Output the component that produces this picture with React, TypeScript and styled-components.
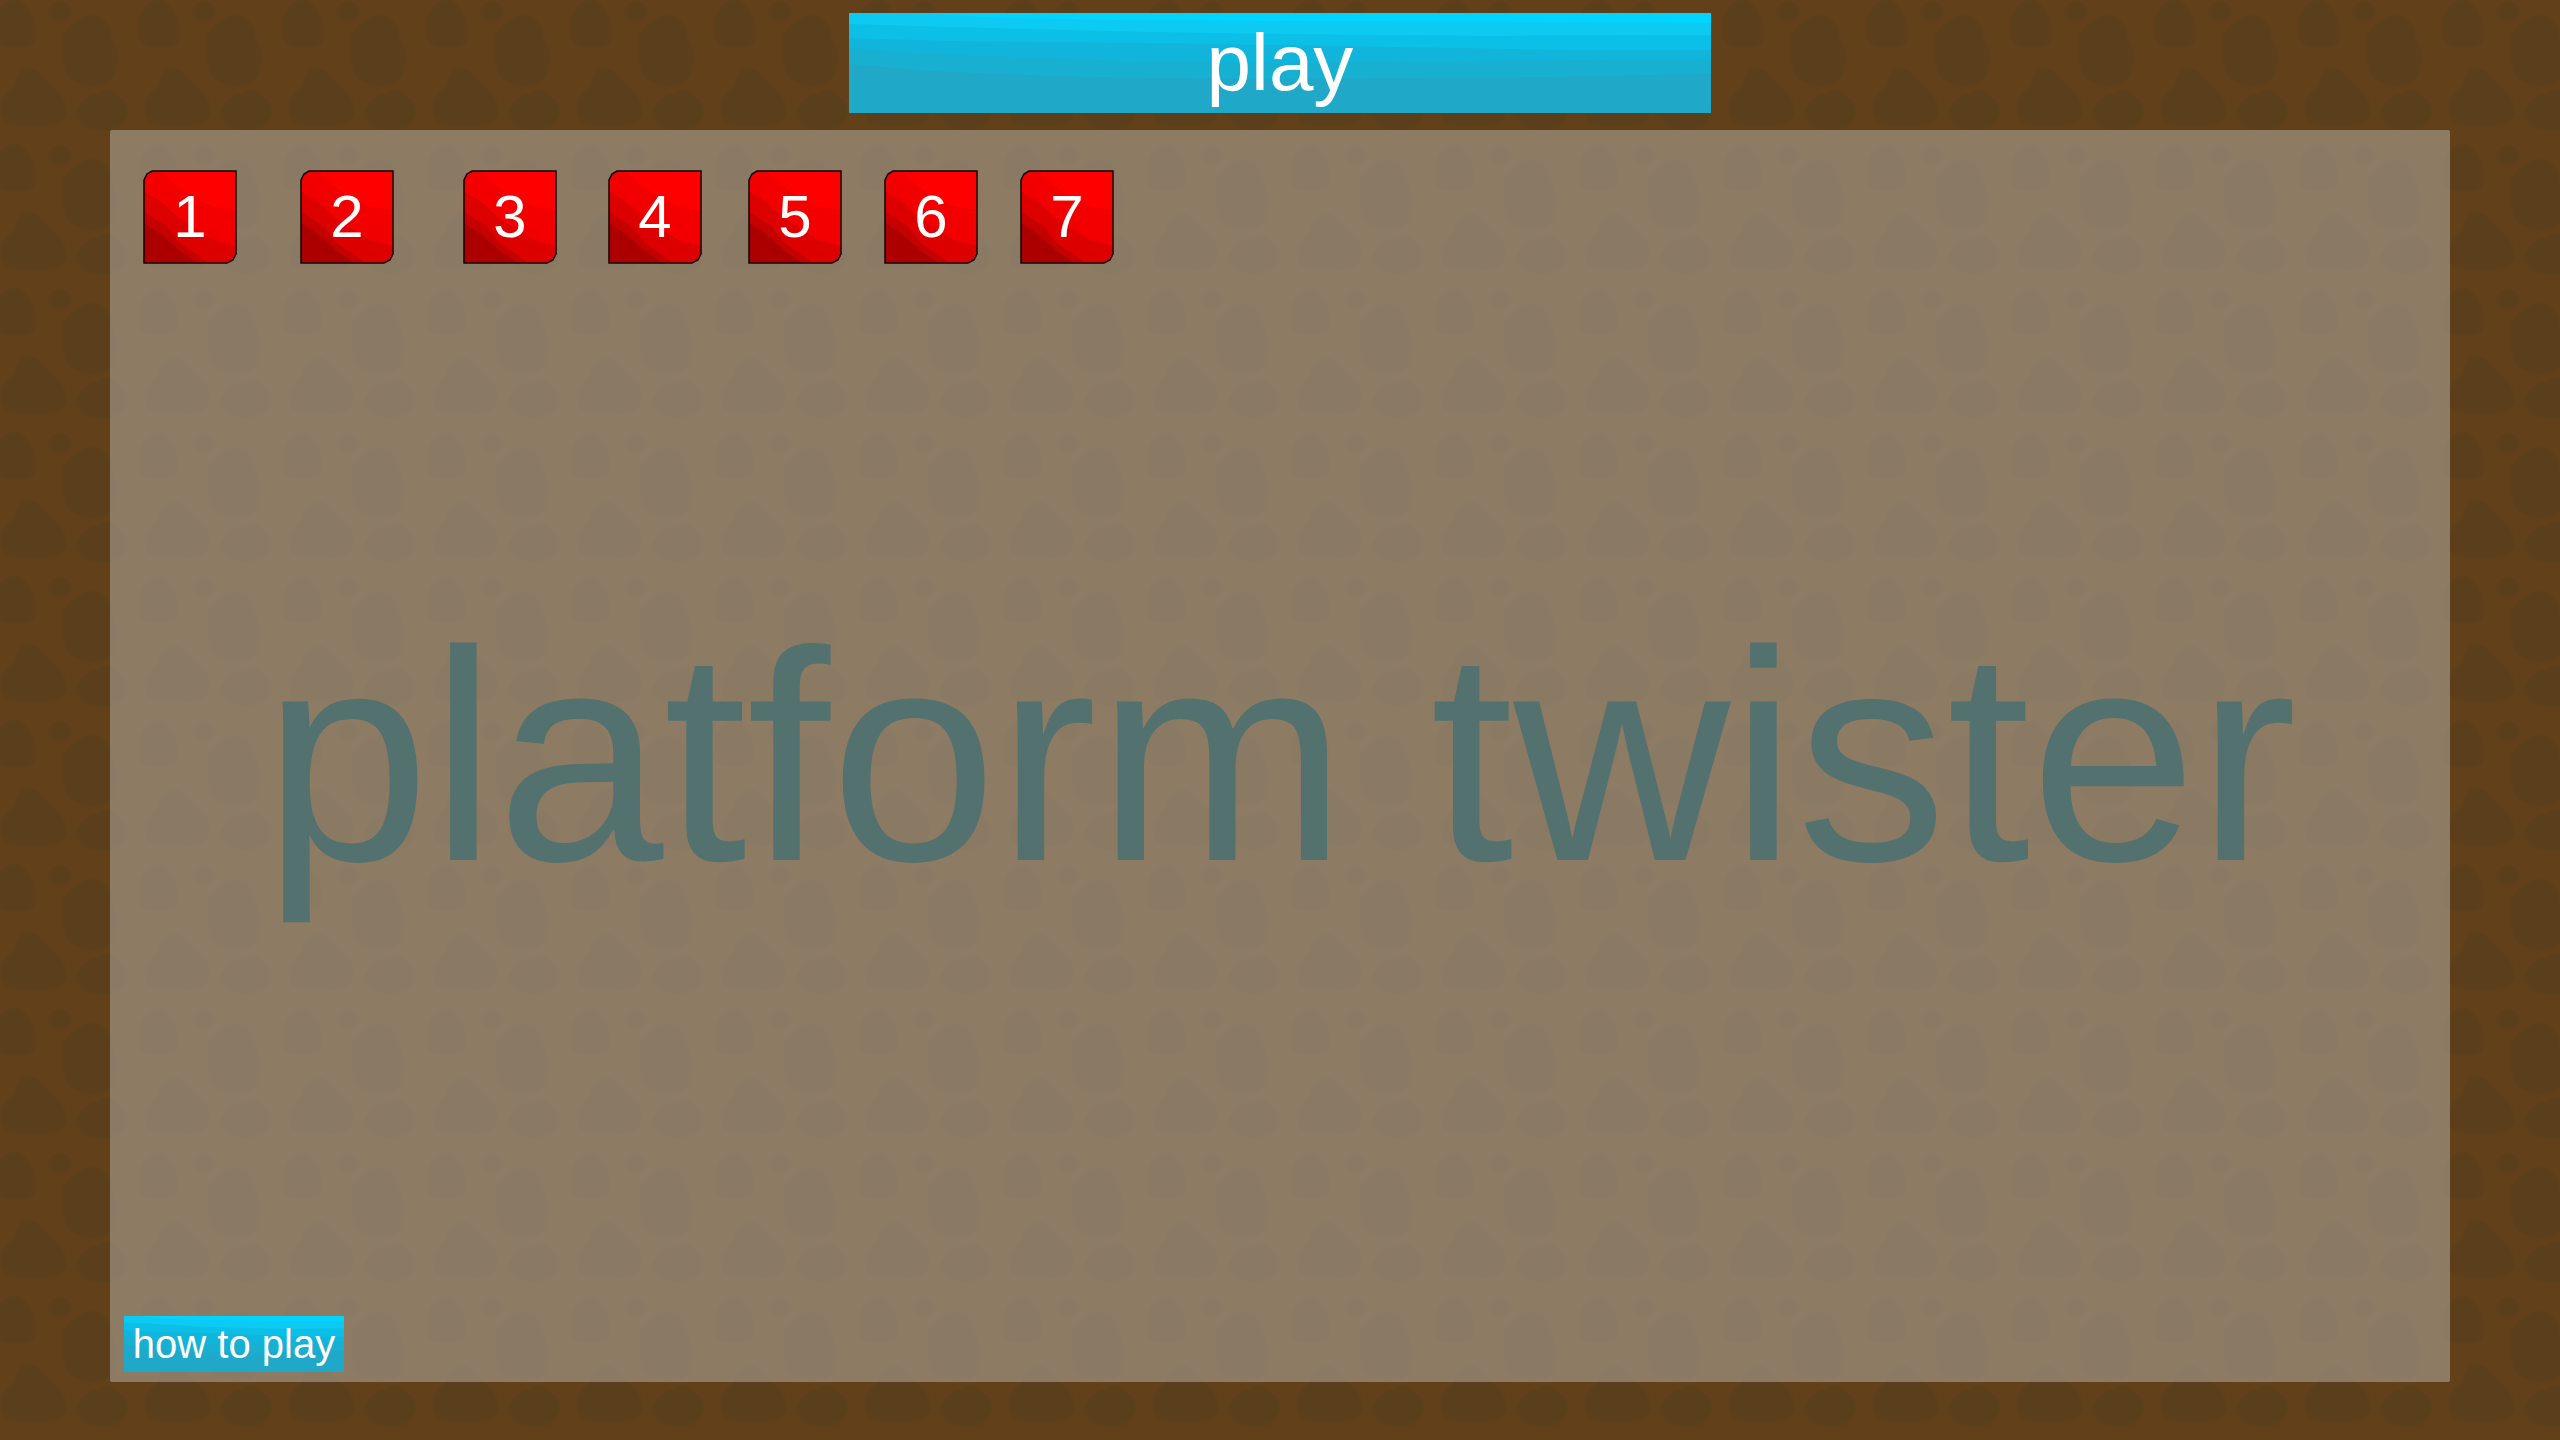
import React from "react";
import styled, { createGlobalStyle } from "styled-components";

const GlobalStyle = createGlobalStyle`
  * { box-sizing: border-box; }
  body {
    margin: 0;
    background: #61401a;
    font-family: "Liberation Sans", Arial, Helvetica, sans-serif;
  }
`;

const Screen = styled.div`
  position: relative;
  isolation: isolate;
  min-height: 100vh;
  display: flex;
  flex-direction: column;
  padding: 13px 110px 58px;
`;

const Wall = styled.svg`
  position: absolute;
  inset: 0;
  width: 100%;
  height: 100%;
  z-index: -1;
`;

const Header = styled.header`
  display: flex;
  justify-content: center;
  padding-bottom: 17px;
`;

const TexturedButton = styled.button`
  position: relative;
  isolation: isolate;
  padding: 0;
  border: 0;
  background: none;
  color: #fff;
  font-family: inherit;
  line-height: 1;
  white-space: nowrap;
  cursor: pointer;
`;

const BlueButton = styled(TexturedButton)<{ $large?: boolean }>`
  width: ${({ $large }) => ($large ? "862px" : "220px")};
  max-width: 100%;
  height: ${({ $large }) => ($large ? "100px" : "56px")};
  font-size: ${({ $large }) => ($large ? "80px" : "40px")};
`;

const LevelButton = styled(TexturedButton)`
  width: 94px;
  height: 94px;
  font-size: 60px;
`;

const Texture = styled.svg`
  position: absolute;
  inset: 0;
  width: 100%;
  height: 100%;
  z-index: -1;
`;

const Panel = styled.main`
  flex: 1;
  display: grid;
  grid-template-rows: 1fr auto 1fr;
  border-radius: 2px;
  background: rgba(185, 182, 173, 0.5);
`;

const Levels = styled.nav`
  display: grid;
  grid-template-columns: 157px 163px 145px 140px 136px 136px 94px;
  align-items: start;
  padding: 40px 0 0 33px;
`;

const Title = styled.h1`
  margin: 0;
  color: #52716f;
  font-size: 300px;
  font-weight: 400;
  line-height: 1;
  text-align: center;
`;

const Footer = styled.footer`
  display: flex;
  align-items: flex-end;
  padding: 0 0 10px 14px;
`;

const levels = [1, 2, 3, 4, 5, 6, 7];

function DirtWall() {
  return (
    <Wall aria-hidden="true">
      <defs>
        <pattern id="dirt" width="144" height="144" patternUnits="userSpaceOnUse">
          <rect width="144" height="144" fill="#61401a" />
          <g fill="#5b3f1b" stroke="#5b3f1b" strokeOpacity="0.4" strokeWidth="3">
            <path d="M9 2 Q16 -2 23 4 Q30 12 32 22 Q37 31 33 41 Q30 46 23 46 H6 Q-2 45 -4 36 V20 Q-2 8 9 2Z" />
            <path d="M153 2 Q160 -2 167 4 Q174 12 176 22 Q181 31 177 41 Q174 46 167 46 H150 Q142 45 140 36 V20 Q142 8 153 2Z" />
            <path d="M53 4 Q59 0 66 4 Q72 8 70 15 Q66 21 59 20 Q50 18 48 12Z" />
            <path d="M80 20 Q90 13 101 18 Q109 24 111 38 Q117 46 116 62 Q115 77 106 82 Q92 88 77 82 Q66 78 64 64 V36 Q67 28 80 20Z" />
            <path d="M21 72 Q28 66 38 73 Q44 80 52 87 Q64 95 65 107 Q66 119 57 123 Q34 128 9 123 Q1 120 2 105 Q5 94 14 88 Q16 77 21 72Z" />
            <path d="M90 97 Q99 94 106 91 Q114 90 118 97 Q126 101 127 111 Q125 122 117 127 Q105 132 92 128 Q80 124 76 116 Q77 107 83 103 Q85 98 90 97Z" />
          </g>
        </pattern>
      </defs>
      <rect width="100%" height="100%" fill="url(#dirt)" />
    </Wall>
  );
}

function BlueTexture() {
  return (
    <Texture viewBox="0 0 861 100" preserveAspectRatio="none" aria-hidden="true">
      <rect width="861" height="100" fill="#00d4ff" />
      <path d="M0 0H65L150 5L260 7L430 8L700 9L861 10V100H0Z" fill="#0ccaf1" />
      <path d="M0 11L100 14L300 19L430 21L640 23L861 22V100H0Z" fill="#0cbfe6" />
      <path d="M0 25L100 28L300 30L430 32L720 37L861 37V100H0Z" fill="#11b5dc" />
      <path d="M0 35L80 41L200 45L300 49L430 50L600 48L861 46V100H0Z" fill="#18b0d1" />
      <path d="M0 51L80 58L200 63L300 65L430 66L700 64L861 61V100H0Z" fill="#1fa8c7" />
    </Texture>
  );
}

function RedTexture({ clip }: { clip: string }) {
  const outline = "M9 1H93V84L90 90L84 93H1V10L4 4Z";
  return (
    <Texture viewBox="0 0 94 94" aria-hidden="true">
      <clipPath id={clip}>
        <path d={outline} />
      </clipPath>
      <g clipPath={`url(#${clip})`}>
        <rect width="94" height="94" fill="#ff0000" />
        <path d="M0 0H18L30 13L53 29L73 37L94 40V94H0Z" fill="#f20000" />
        <path d="M0 21L20 33L33 46L53 59L70 70L94 76V94H0Z" fill="#dc0000" />
        <path d="M0 41L23 56L37 73L53 84L66 94H0Z" fill="#c40000" />
        <path d="M0 52L20 66L37 81L56 94H0Z" fill="#ac0000" />
      </g>
      <path d={outline} fill="none" stroke="#120303" strokeWidth="1.5" />
    </Texture>
  );
}

export default function App() {
  return (
    <Screen>
      <GlobalStyle />
      <DirtWall />
      <Header>
        <BlueButton type="button" $large>
          <BlueTexture />
          play
        </BlueButton>
      </Header>
      <Panel>
        <Levels aria-label="Levels">
          {levels.map((level) => (
            <LevelButton type="button" key={level}>
              <RedTexture clip={`tile-${level}`} />
              {level}
            </LevelButton>
          ))}
        </Levels>
        <Title>platform twister</Title>
        <Footer>
          <BlueButton type="button">
            <BlueTexture />
            how to play
          </BlueButton>
        </Footer>
      </Panel>
    </Screen>
  );
}
